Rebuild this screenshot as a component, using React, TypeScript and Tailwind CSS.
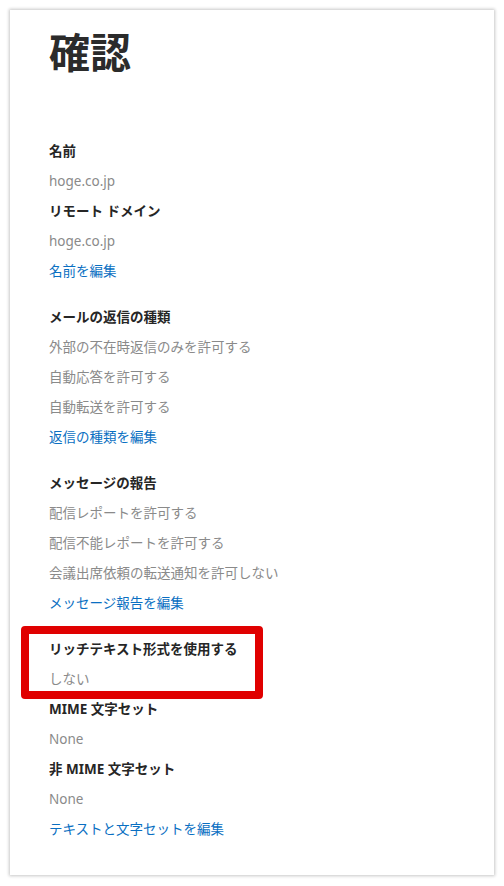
import React from 'react';

type Row = { kind: 'head' | 'value' | 'link'; text: string };

const sections: Row[][] = [
  [
    { kind: 'head', text: '名前' },
    { kind: 'value', text: 'hoge.co.jp' },
    { kind: 'head', text: 'リモート ドメイン' },
    { kind: 'value', text: 'hoge.co.jp' },
    { kind: 'link', text: '名前を編集' },
  ],
  [
    { kind: 'head', text: 'メールの返信の種類' },
    { kind: 'value', text: '外部の不在時返信のみを許可する' },
    { kind: 'value', text: '自動応答を許可する' },
    { kind: 'value', text: '自動転送を許可する' },
    { kind: 'link', text: '返信の種類を編集' },
  ],
  [
    { kind: 'head', text: 'メッセージの報告' },
    { kind: 'value', text: '配信レポートを許可する' },
    { kind: 'value', text: '配信不能レポートを許可する' },
    { kind: 'value', text: '会議出席依頼の転送通知を許可しない' },
    { kind: 'link', text: 'メッセージ報告を編集' },
  ],
];

const rowClass = {
  head: 'font-bold text-[#262626]',
  value: 'text-[#8a8a8a]',
  link: 'text-[#0a6fc2]',
};

const Line: React.FC<{ row: Row }> = ({ row }) => (
  <div className={`h-[30px] leading-[30px] text-[13.5px] whitespace-nowrap ${rowClass[row.kind]}`}>{row.text}</div>
);

export default function App() {
  return (
    <div
      className="min-h-[886px] bg-white p-[10px]"
      style={{ fontFamily: '"Noto Sans", "Noto Sans CJK JP", sans-serif' }}
    >
      <div className="h-[865px] bg-white pl-[39px] pt-[18px] shadow-[0_0_3px_1px_rgba(0,0,0,0.22)]">
        <h1 className="text-[41px] leading-[48px] font-bold text-[#2b2b2b]">確認</h1>

        <div className="mt-[60px] flex flex-col gap-4">
          {sections.map((rows, i) => (
            <div key={i}>
              {rows.map((r, j) => (
                <Line key={j} row={r} />
              ))}
            </div>
          ))}

          <div>
            <div className="relative">
              <div className="absolute -left-[28px] -top-[8px] -bottom-[5px] w-[242px] rounded-[4px] border-[8px] border-[#e00000]" />
              <Line row={{ kind: 'head', text: 'リッチテキスト形式を使用する' }} />
              <Line row={{ kind: 'value', text: 'しない' }} />
            </div>
            <Line row={{ kind: 'head', text: 'MIME 文字セット' }} />
            <Line row={{ kind: 'value', text: 'None' }} />
            <Line row={{ kind: 'head', text: '非 MIME 文字セット' }} />
            <Line row={{ kind: 'value', text: 'None' }} />
            <Line row={{ kind: 'link', text: 'テキストと文字セットを編集' }} />
          </div>
        </div>
      </div>
    </div>
  );
}
